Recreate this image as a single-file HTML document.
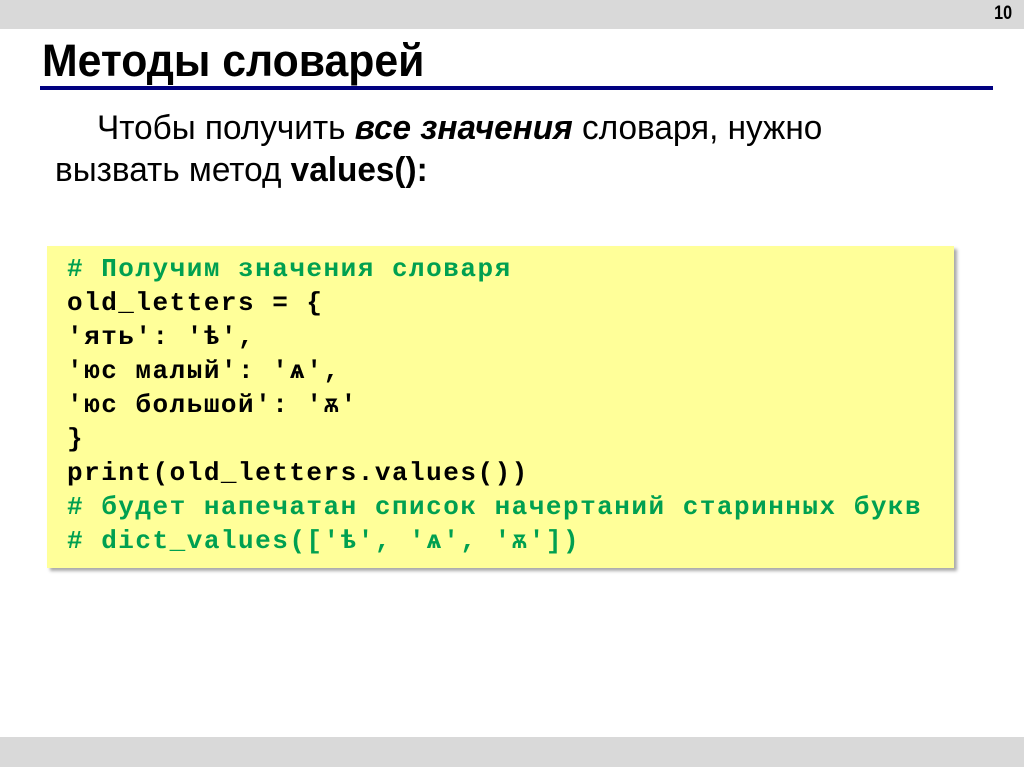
<!DOCTYPE html>
<html><head><meta charset="utf-8"><style>
body{margin:0;width:1024px;height:767px;position:relative;background:#fff;overflow:hidden;font-family:"Liberation Sans",sans-serif}
.top{position:absolute;left:0;top:0;width:1024px;height:29px;background:#d9d9d9}
.bot{position:absolute;left:0;top:737px;width:1024px;height:30px;background:#d9d9d9}
.num{position:absolute;right:12px;top:3px;font:bold 19px "Liberation Sans",sans-serif;color:#000;transform:scaleX(.85);transform-origin:right}
h1{position:absolute;left:42px;top:35px;margin:0;font-size:45px;font-weight:bold;color:#000;white-space:nowrap;transform:scaleX(.95);transform-origin:left}
.line{position:absolute;left:40px;top:86px;width:953px;height:4px;background:#000080}
.p{position:absolute;font-size:34px;color:#000;white-space:nowrap;transform:scaleX(.98);transform-origin:left}
.box{position:absolute;left:47px;top:246px;width:907px;height:322px;background:#ffff99;box-shadow:3px 3px 3px #aaa}
pre{position:absolute;left:67px;top:252px;margin:0;font:bold 26px/34px "Liberation Mono",monospace;letter-spacing:1.5px;color:#000}
.g{color:#00a050}
</style></head><body>
<div class="top"></div><div class="num">10</div>
<h1>Методы словарей</h1>
<div class="line"></div>
<div class="p" style="left:97px;top:109px">Чтобы получить <b><i>все значения</i></b>  словаря, нужно</div>
<div class="p" style="left:55px;top:151px">вызвать метод <b>values():</b></div>
<div class="box"></div>
<pre><span class="g"># Получим значения словаря</span>
old_letters = {
'ять': 'ѣ',
'юс малый': 'ѧ',
'юс большой': 'ѫ'
}
print(old_letters.values())
<span class="g"># будет напечатан список начертаний старинных букв</span>
<span class="g"># dict_values(['ѣ', 'ѧ', 'ѫ'])</span></pre>
<div class="bot"></div>
</body></html>
